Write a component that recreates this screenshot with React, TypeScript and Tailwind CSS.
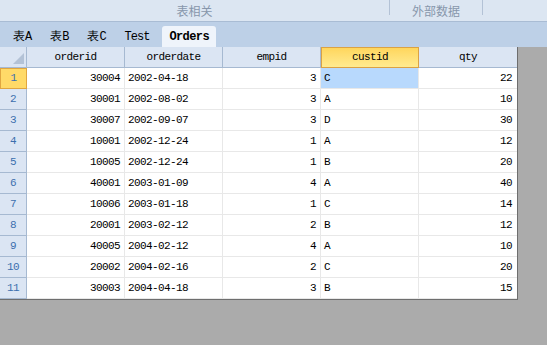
import React from "react";

const rows: [string, string, string, string, string][] = [
  ["30004", "2002-04-18", "3", "C", "22"],
  ["30001", "2002-08-02", "3", "A", "10"],
  ["30007", "2002-09-07", "3", "D", "30"],
  ["10001", "2002-12-24", "1", "A", "12"],
  ["10005", "2002-12-24", "1", "B", "20"],
  ["40001", "2003-01-09", "4", "A", "40"],
  ["10006", "2003-01-18", "1", "C", "14"],
  ["20001", "2003-02-12", "2", "B", "12"],
  ["40005", "2004-02-12", "4", "A", "10"],
  ["20002", "2004-02-16", "2", "C", "20"],
  ["30003", "2004-04-18", "3", "B", "15"],
];

const mono = "font-mono text-[11px] tracking-[-0.6px]";

export default function App() {
  return (
    <div className="w-[547px] h-[345px] bg-[#ababab] flex flex-col overflow-hidden">
      {/* ribbon group labels */}
      <div className="h-[21px] bg-[#dce6f2] flex items-start text-[12px] text-[#8796ab] font-['Noto_Sans_CJK_SC',sans-serif]">
        <div className="w-[389px] h-[21px] flex items-center justify-center leading-none">表相关</div>
        <div className="w-px h-[15px] bg-[#b3c2d6]" />
        <div className="w-[92px] h-[21px] flex items-center justify-center leading-none">外部数据</div>
        <div className="w-px h-[15px] bg-[#b3c2d6]" />
      </div>
      <div className="h-px bg-[#a9bcd4]" />
      {/* tabs */}
      <div className="h-[25px] bg-[#bdd0e7] flex items-end pl-[4px] text-[12px] text-black font-mono">
        <div className="h-[21px] px-[9px] flex items-center">表A</div>
        <div className="h-[21px] px-[9px] flex items-center">表B</div>
        <div className="h-[21px] px-[9px] flex items-center">表C</div>
        <div className="h-[21px] px-[9px] flex items-center tracking-[-1px]">Test</div>
        <div className="h-[21px] ml-[4px] px-[7px] flex items-center bg-[#eff4fb] rounded-t-[3px] font-bold tracking-[-0.6px]">Orders</div>
      </div>
      {/* grid */}
      <div className="w-[518px] bg-white border-r border-b border-[#6e6e6e] flex flex-col">
        <div className={`flex h-[21px] ${mono} text-black`}>
          <div className="w-[27px] h-[21px] bg-[#dbe5f3] border-r border-b border-[#a6b9d1] relative">
            <svg className="absolute right-[2px] bottom-[3px]" width="11" height="11" viewBox="0 0 11 11">
              <polygon points="11,0 11,11 0,11" fill="#b3c2d6" />
            </svg>
          </div>
          {["orderid", "orderdate", "empid"].map((h) => (
            <div key={h} className="w-[98px] h-[21px] bg-[#dbe5f3] border-r border-b border-[#a6b9d1] flex items-center justify-center">
              {h}
            </div>
          ))}
          <div className="w-[98px] h-[21px] bg-gradient-to-b from-[#ffd65c] to-[#ffeb90] border border-[#dba244] flex items-center justify-center">
            custid
          </div>
          <div className="w-[98px] h-[21px] bg-[#dbe5f3] border-b border-[#a6b9d1] flex items-center justify-center">
            qty
          </div>
        </div>
        {rows.map((r, i) => (
          <div key={i} className={`flex h-[21px] ${mono} text-black`}>
            <div
              className={
                i === 0
                  ? "w-[27px] h-[21px] bg-[#ffda68] border border-[#e0a640] text-[#3c6fae] flex items-center justify-center"
                  : "w-[27px] h-[21px] bg-[#dbe5f3] border-r border-b border-[#a6b9d1] text-[#3c6fae] flex items-center justify-center"
              }
            >
              {i + 1}
            </div>
            <div className="w-[98px] h-[21px] border-r border-b border-[#e8e8e8] flex items-center justify-end pr-[4px]">{r[0]}</div>
            <div className="w-[98px] h-[21px] border-r border-b border-[#e8e8e8] flex items-center pl-[3px]">{r[1]}</div>
            <div className="w-[98px] h-[21px] border-r border-b border-[#e8e8e8] flex items-center justify-end pr-[4px]">{r[2]}</div>
            <div
              className={`w-[98px] h-[21px] border-r border-b border-[#e8e8e8] flex items-center pl-[3px] ${
                i === 0 ? "bg-[#b8d9fd]" : ""
              }`}
            >
              {r[3]}
            </div>
            <div className="w-[98px] h-[21px] border-b border-[#e8e8e8] flex items-center justify-end pr-[5px]">{r[4]}</div>
          </div>
        ))}
      </div>
    </div>
  );
}
